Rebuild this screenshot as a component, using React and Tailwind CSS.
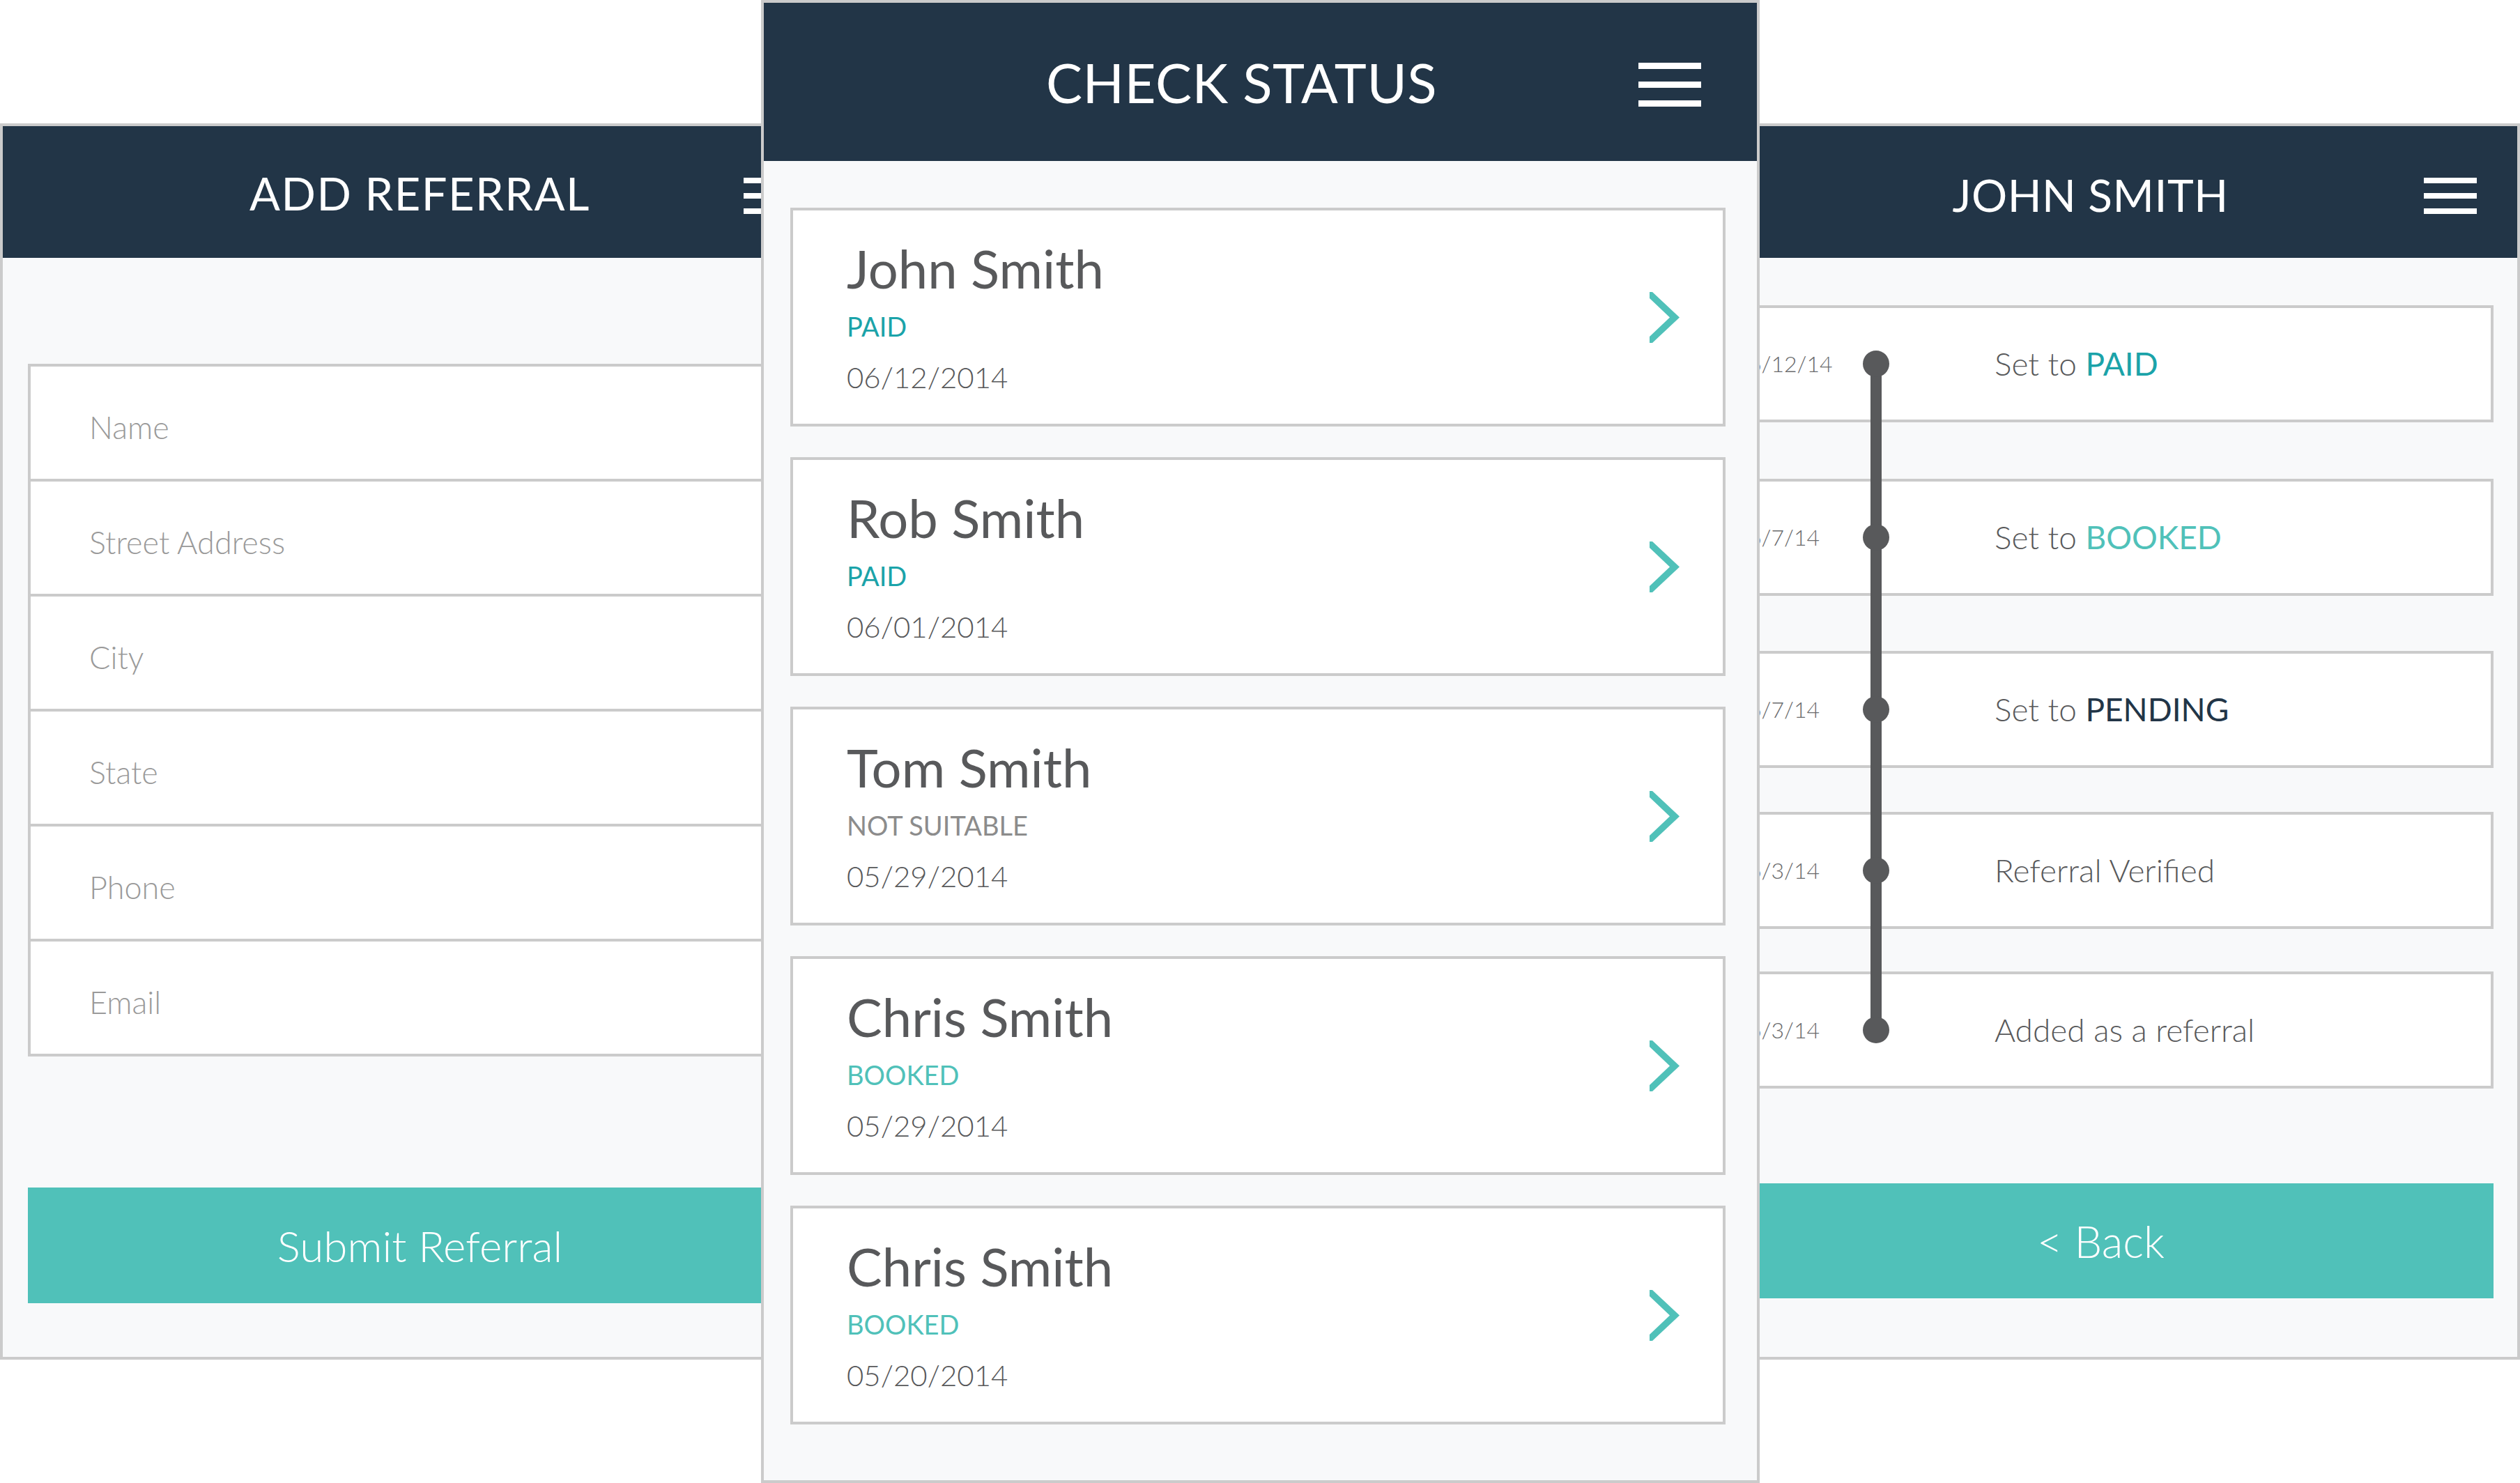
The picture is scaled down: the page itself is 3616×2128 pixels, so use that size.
import React from "react";

const FONT = { fontFamily: 'Lato, "Open Sans", "Liberation Sans", sans-serif' };

function Hamburger({ w, h, gap }) {
  return (
    <div className="flex flex-col" style={{ gap }}>
      <div className="bg-white" style={{ width: w, height: h }} />
      <div className="bg-white" style={{ width: w, height: h }} />
      <div className="bg-white" style={{ width: w, height: h }} />
    </div>
  );
}

function Chevron() {
  return (
    <svg width="43" height="73" viewBox="0 0 43 73" className="shrink-0">
      <polygon points="0,0 4,0 43,36.5 4,73 0,73 0,64 29,36.5 0,9" fill="#50c1b9" />
    </svg>
  );
}

const FIELDS = ["Name", "Street Address", "City", "State", "Phone", "Email"];

function LeftPanel() {
  return (
    <div className="absolute left-0 top-[177px] w-[1205px] h-[1774px] border-4 border-[#cbcbcb] bg-[#f8f9fa] flex flex-col">
      <div className="relative h-[189px] shrink-0 bg-[#223547] flex items-center justify-center pt-[4px]">
        <span className="text-white text-[65px] leading-none tracking-[1.5px]">ADD REFERRAL</span>
        <div className="absolute right-[58px] top-[74px]">
          <Hamburger w={76} h={8} gap={14} />
        </div>
      </div>
      <div className="px-[36px] pt-[152px] flex flex-col">
        <div className="border-x-4 border-t-4 border-[#cbcbcb] bg-white flex flex-col">
          {FIELDS.map((f) => (
            <div key={f} className="h-[165px] border-b-4 border-[#cbcbcb] flex items-center pl-[84px] pt-[14px]">
              <span className="text-[45px] leading-none font-light text-[#9a9a9a]">{f}</span>
            </div>
          ))}
        </div>
        <div className="mt-[188px] h-[166px] bg-[#50c1b9] flex items-center justify-center">
          <span className="text-white text-[62px] leading-none font-light">Submit Referral</span>
        </div>
      </div>
    </div>
  );
}

const CARDS = [
  { name: "John Smith", status: "PAID", color: "text-[#1ba3a9]", date: "06/12/2014" },
  { name: "Rob Smith", status: "PAID", color: "text-[#1ba3a9]", date: "06/01/2014" },
  { name: "Tom Smith", status: "NOT SUITABLE", color: "text-[#8c8c8c]", date: "05/29/2014" },
  { name: "Chris Smith", status: "BOOKED", color: "text-[#50c1b9]", date: "05/29/2014" },
  { name: "Chris Smith", status: "BOOKED", color: "text-[#50c1b9]", date: "05/20/2014" },
];

function MiddlePanel() {
  return (
    <div className="absolute left-[1092px] top-0 z-10 w-[1433px] h-[2128px] border-4 border-[#cbcbcb] bg-[#f8f9fa] flex flex-col">
      <div className="relative h-[227px] shrink-0 bg-[#223547] flex items-center justify-center pr-[54px]">
        <span className="text-white text-[78px] leading-none tracking-[0.5px]">CHECK STATUS</span>
        <div className="absolute right-[80px] top-[86px]">
          <Hamburger w={90} h={9} gap={18} />
        </div>
      </div>
      <div className="pt-[67px] pl-[38px] flex flex-col gap-[44px]">
        {CARDS.map((c, i) => (
          <div key={i} className="w-[1342px] h-[314px] border-4 border-[#cbcbcb] bg-white flex">
            <div className="flex flex-col pl-[77px] pt-[45px]">
              <span className="text-[76px] leading-none text-[#58595b]">{c.name}</span>
              <span className={`mt-[26px] text-[38px] leading-none ${c.color}`}>{c.status}</span>
              <span className="mt-[33px] text-[42px] leading-none font-light text-[#58595b]">{c.date}</span>
            </div>
            <div className="ml-auto mr-[62px] self-center flex">
              <Chevron />
            </div>
          </div>
        ))}
      </div>
    </div>
  );
}

const TIMELINE = [
  { date: "6/12/14", pre: "Set to ", hl: "PAID", hlc: "text-[#1ba3a9]", mt: "mt-0" },
  { date: "6/7/14", pre: "Set to ", hl: "BOOKED", hlc: "text-[#50c1b9]", mt: "mt-[81px]" },
  { date: "6/7/14", pre: "Set to ", hl: "PENDING", hlc: "text-[#223547]", mt: "mt-[79px]" },
  { date: "6/3/14", pre: "Referral Verified", hl: "", hlc: "", mt: "mt-[63px]" },
  { date: "6/3/14", pre: "Added as a referral", hl: "", hlc: "", mt: "mt-[61px]" },
];

function RightPanel() {
  return (
    <div className="absolute right-0 top-[177px] w-[1205px] h-[1774px] border-4 border-[#cbcbcb] bg-[#f8f9fa] flex flex-col">
      <div className="relative h-[189px] shrink-0 bg-[#223547] flex items-center justify-center pt-[8px] pr-[28px]">
        <span className="text-white text-[64px] leading-none tracking-[0.5px]">JOHN SMITH</span>
        <div className="absolute right-[58px] top-[74px]">
          <Hamburger w={76} h={8} gap={14} />
        </div>
      </div>
      <div className="relative pt-[68px] pl-[36px] pr-[34px] flex flex-col">
        {TIMELINE.map((t, i) => (
          <div key={i} className={`${t.mt} h-[168px] border-4 border-[#cbcbcb] bg-white flex items-center`}>
            <span className="w-[166px] pl-[54px] whitespace-nowrap text-[32px] leading-none font-light text-[#6a6b6d]">{t.date}</span>
            <div className="relative z-10 ml-[52px] w-[38px] h-[38px] rounded-full bg-[#58595b] shrink-0" />
            <span className="ml-[151px] text-[46px] leading-none font-light text-[#58595b]">
              {t.pre}
              {t.hl && <span className={`font-normal ${t.hlc}`}>{t.hl}</span>}
            </span>
          </div>
        ))}
        <div className="absolute left-[269px] top-[152px] w-[16px] h-[955px] bg-[#58595b]" />
        <div className="mt-[136px] h-[165px] bg-[#50c1b9] flex items-center justify-center">
          <span className="text-white text-[63px] leading-none font-light">&lt; Back</span>
        </div>
      </div>
    </div>
  );
}

export default function App() {
  return (
    <div className="relative w-[3616px] h-[2128px] bg-white overflow-hidden" style={FONT}>
      <LeftPanel />
      <RightPanel />
      <MiddlePanel />
    </div>
  );
}
